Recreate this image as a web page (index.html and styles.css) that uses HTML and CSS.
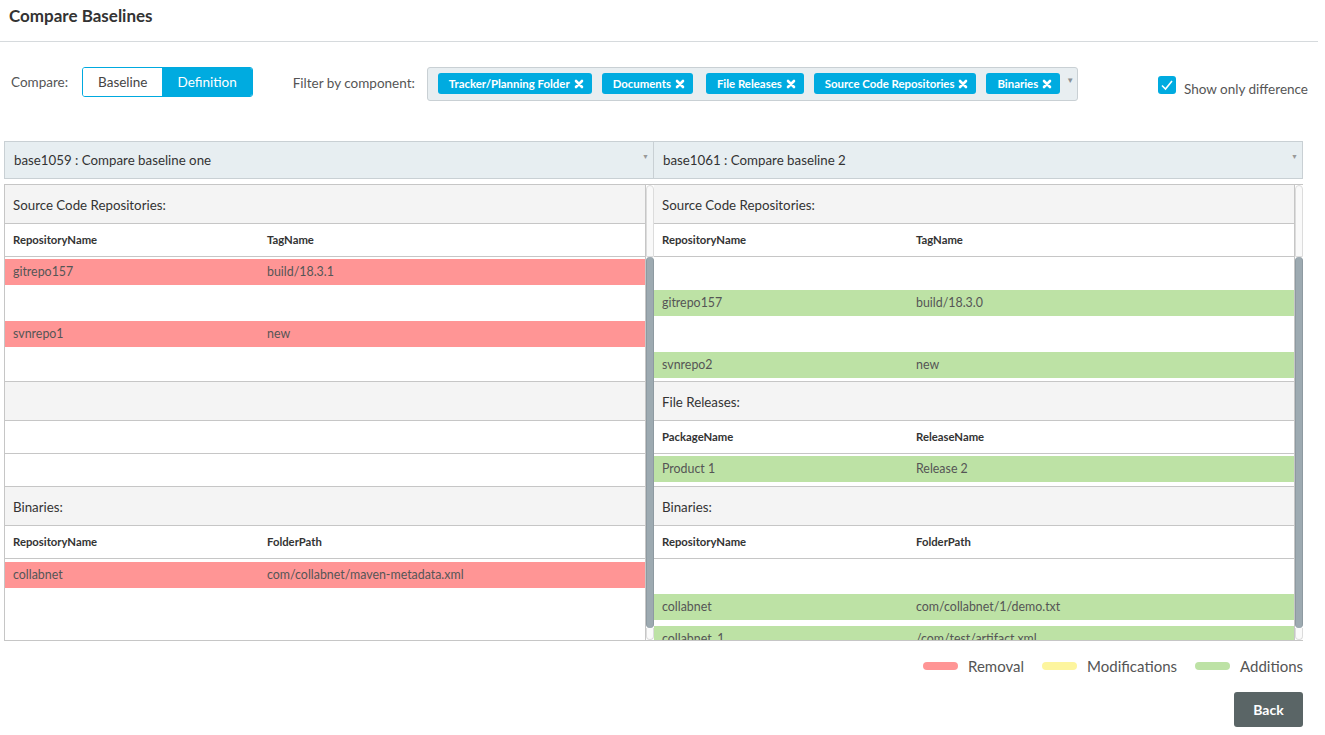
FILE: index.html
```html
<!DOCTYPE html>
<html>
<head>
<meta charset="utf-8">
<link rel="stylesheet" href="styles.css">
</head>
<body>
<div class="header"><h1 class="title">Compare Baselines</h1></div>

<div class="toolbar">
  <span class="lbl compare-lbl">Compare:</span>
  <div class="toggle">
    <span class="tbtn">Baseline</span>
    <span class="tbtn active">Definition</span>
  </div>
  <span class="lbl filter-lbl">Filter by component:</span>
  <div class="filter">
    <span class="tag">Tracker/Planning Folder <svg class="x" viewBox="0 0 10 10"><path d="M2 2L8 8M8 2L2 8"/></svg></span>
    <span class="tag wide">Documents <svg class="x" viewBox="0 0 10 10"><path d="M2 2L8 8M8 2L2 8"/></svg></span>
    <span class="tag">File Releases <svg class="x" viewBox="0 0 10 10"><path d="M2 2L8 8M8 2L2 8"/></svg></span>
    <span class="tag">Source Code Repositories <svg class="x" viewBox="0 0 10 10"><path d="M2 2L8 8M8 2L2 8"/></svg></span>
    <span class="tag">Binaries <svg class="x" viewBox="0 0 10 10"><path d="M2 2L8 8M8 2L2 8"/></svg></span>
    <span class="caret">&#9660;</span>
  </div>
  <label class="showdiff">
    <span class="cbox"><svg viewBox="0 0 18 18"><path d="M4 9.5L7.5 13L14 5"/></svg></span>
    <span class="cbtext">Show only difference</span>
  </label>
</div>

<div class="compare">
  <div class="col">
    <div class="select"><span>base1059 : Compare baseline one</span><span class="scaret">&#9660;</span></div>
    <div class="panel">
      <div class="content">
        <div class="sec-head">Source Code Repositories:</div>
        <div class="col-head"><span>RepositoryName</span><span>TagName</span></div>
        <div class="rows">
          <div class="row"><div class="band red"><span>gitrepo157</span><span>build/18.3.1</span></div></div>
          <div class="row"></div>
          <div class="row"><div class="band red"><span>svnrepo1</span><span>new</span></div></div>
          <div class="row"></div>
        </div>
        <div class="sec-head"></div>
        <div class="col-head"></div>
        <div class="rows one">
          <div class="row"></div>
        </div>
        <div class="sec-head">Binaries:</div>
        <div class="col-head"><span>RepositoryName</span><span>FolderPath</span></div>
        <div class="rows last">
          <div class="row"><div class="band red"><span>collabnet</span><span>com/collabnet/maven-metadata.xml</span></div></div>
          <div class="row"></div>
          <div class="row"></div>
        </div>
      </div>
      <div class="sbar"><div class="strack-top"></div><div class="sthumb"></div><div class="strack-bot"></div></div>
    </div>
  </div>
  <div class="col">
    <div class="select"><span>base1061 : Compare baseline 2</span><span class="scaret">&#9660;</span></div>
    <div class="panel">
      <div class="content">
        <div class="sec-head">Source Code Repositories:</div>
        <div class="col-head"><span>RepositoryName</span><span>TagName</span></div>
        <div class="rows">
          <div class="row"></div>
          <div class="row"><div class="band green"><span>gitrepo157</span><span>build/18.3.0</span></div></div>
          <div class="row"></div>
          <div class="row"><div class="band green"><span>svnrepo2</span><span>new</span></div></div>
        </div>
        <div class="sec-head">File Releases:</div>
        <div class="col-head"><span>PackageName</span><span>ReleaseName</span></div>
        <div class="rows one">
          <div class="row"><div class="band green"><span>Product 1</span><span>Release 2</span></div></div>
        </div>
        <div class="sec-head">Binaries:</div>
        <div class="col-head"><span>RepositoryName</span><span>FolderPath</span></div>
        <div class="rows last">
          <div class="row"></div>
          <div class="row"><div class="band green"><span>collabnet</span><span>com/collabnet/1/demo.txt</span></div></div>
          <div class="row"><div class="band green"><span>collabnet_1</span><span>/com/test/artifact.xml</span></div></div>
        </div>
      </div>
      <div class="sbar"><div class="strack-top"></div><div class="sthumb"></div><div class="strack-bot"></div></div>
    </div>
  </div>
</div>

<div class="legend">
  <span class="pill p-red"></span><span class="ltext">Removal</span>
  <span class="pill p-yellow"></span><span class="ltext">Modifications</span>
  <span class="pill p-green"></span><span class="ltext last">Additions</span>
</div>

<div class="actions"><button class="back">Back</button></div>
</body>
</html>
```

FILE: styles.css
```css
* { box-sizing: border-box; }
html, body { margin: 0; padding: 0; background: #fff; }
body {
  font-family: Lato, "Source Sans Pro", "Liberation Sans", sans-serif;
  color: #333;
  width: 1325px;
  height: 735px;
  overflow: hidden;
}

.header {
  height: 42px;
  border-bottom: 1px solid #d6dadd;
  margin-right: 7px;
  padding: 5px 9px 0;
}
.title {
  margin: 0;
  font-size: 17px;
  font-weight: 700;
  color: #333;
  line-height: 22px;
}

.toolbar {
  display: flex;
  align-items: flex-start;
  margin-top: 25px;
  padding-left: 11px;
  padding-right: 17px;
  height: 34px;
}
.lbl { font-size: 13.5px; color: #555; line-height: 30px; }
.compare-lbl { margin-right: 14px; }
.toggle {
  display: flex;
  border: 1px solid #00a9df;
  border-radius: 3px;
  overflow: hidden;
  height: 30px;
}
.tbtn {
  font-size: 13.5px;
  line-height: 28px;
  padding: 0 15px;
  color: #444;
  background: #fff;
}
.tbtn.active { background: #00abe0; color: #fff; }
.filter-lbl { margin-left: 40px; margin-right: 12px; line-height: 32px; }
.filter {
  display: flex;
  align-items: flex-start;
  height: 34px;
  background: #e8eef1;
  border: 1px solid #c9d0d4;
  border-radius: 3px;
  padding: 5px 3px 0 10px;
}
.tag {
  display: inline-flex;
  align-items: center;
  height: 21px;
  background: #00abe0;
  color: #fff;
  font-size: 11.4px;
  font-weight: 700;
  border-radius: 3px;
  padding: 0 8px 0 11px;
  margin-right: 10px;
  white-space: nowrap;
}
.tag.wide { margin-right: 13px; }
.tag .x {
  width: 10px;
  height: 10px;
  margin-left: 4px;
  fill: none;
  stroke: #fff;
  stroke-width: 2.6;
  stroke-linecap: round;
}
.caret {
  font-size: 8px;
  color: #8a9196;
  margin-left: -4px;
  margin-top: 2px;
}
.showdiff {
  margin-left: auto;
  display: flex;
  align-items: flex-start;
  margin-top: 9px;
}
.cbox {
  width: 18px;
  height: 18px;
  background: #00abe0;
  border-radius: 3px;
  display: inline-block;
}
.cbox svg {
  width: 18px;
  height: 18px;
  display: block;
  fill: none;
  stroke: #fff;
  stroke-width: 1.6;
}
.cbtext { font-size: 13.5px; color: #555; margin-left: 8px; margin-top: 4px; line-height: 18px; }

.compare {
  display: grid;
  grid-template-columns: 650px 649px;
  margin-top: 40px;
  padding-left: 4px;
}
.select {
  height: 38px;
  background: #e7eef1;
  border: 1px solid #c9d0d4;
  display: flex;
  justify-content: space-between;
  align-items: flex-start;
  padding: 0 4px 0 9px;
  font-size: 13.3px;
  color: #333;
  line-height: 37px;
}
.col + .col .select { border-left: none; }
.scaret { font-size: 7px; color: #999; line-height: 28px; }

.panel {
  margin-top: 5px;
  height: 457px;
  display: flex;
  border-top: 1px solid #c6c6c6;
  border-bottom: 1px solid #c6c6c6;
  border-left: 1px solid #c6c6c6;
  overflow: hidden;
}
.col + .col .panel { border-left: none; }
.content { flex: 1; overflow: hidden; }

.sec-head {
  height: 39px;
  background: #f4f4f4;
  border-bottom: 1px solid #c6c6c6;
  padding-left: 8px;
  font-size: 13.3px;
  line-height: 40px;
  color: #333;
}
.col-head {
  height: 33px;
  border-bottom: 1px solid #c6c6c6;
  display: grid;
  grid-template-columns: 254px 1fr;
  padding-left: 8px;
  font-size: 11.3px;
  font-weight: 700;
  line-height: 31px;
  color: #333;
}
.rows { height: 125px; border-bottom: 1px solid #c6c6c6; }
.rows.one { height: 33px; }
.rows.last { border-bottom: none; height: auto; }
.row { height: 31px; padding-top: 2px; }
.rows.one .row { height: 32px; }
.rows.last .row { height: 32px; padding-top: 3px; }
.band {
  height: 26px;
  display: grid;
  grid-template-columns: 254px 1fr;
  padding-left: 8px;
  font-size: 12.4px;
  color: #555;
  line-height: 26px;
}
.red { background: #ff9595; }
.green { background: #bde2a5; }

.sbar {
  width: 9px;
  display: flex;
  flex-direction: column;
  background: #fff;
  border-left: 1px solid #c6c6c6;
}
.strack-top {
  height: 72px;
  border: 1px solid #dcdcdc;
  border-radius: 4px 4px 0 0;
  background: #f9f9f9;
}
.sthumb {
  flex: 1;
  background: #9daab1;
  border-left: 1px solid #8e9aa1;
  border-right: 1px solid #8e9aa1;
  border-radius: 4px;
}
.strack-bot {
  height: 12px;
  border: 1px solid #dcdcdc;
  border-top: none;
  border-radius: 0 0 4px 4px;
  background: #fafafa;
}

.legend {
  display: flex;
  justify-content: flex-end;
  align-items: center;
  margin-top: 15px;
  padding-right: 22px;
  height: 20px;
}
.pill {
  width: 35px;
  height: 8px;
  border-radius: 4px;
  margin-right: 10px;
}
.p-red { background: #ff9595; }
.p-yellow { background: #fdf59e; }
.p-green { background: #bde2a5; }
.ltext { font-size: 15px; color: #555; margin-right: 18px; }
.ltext.last { margin-right: 0; }

.actions {
  display: flex;
  justify-content: flex-end;
  padding-right: 22px;
  margin-top: 16px;
}
.back {
  width: 69px;
  height: 35px;
  background: #5a6566;
  color: #fff;
  border: none;
  border-radius: 3px;
  font-family: inherit;
  font-size: 14px;
  font-weight: 700;
}
```
